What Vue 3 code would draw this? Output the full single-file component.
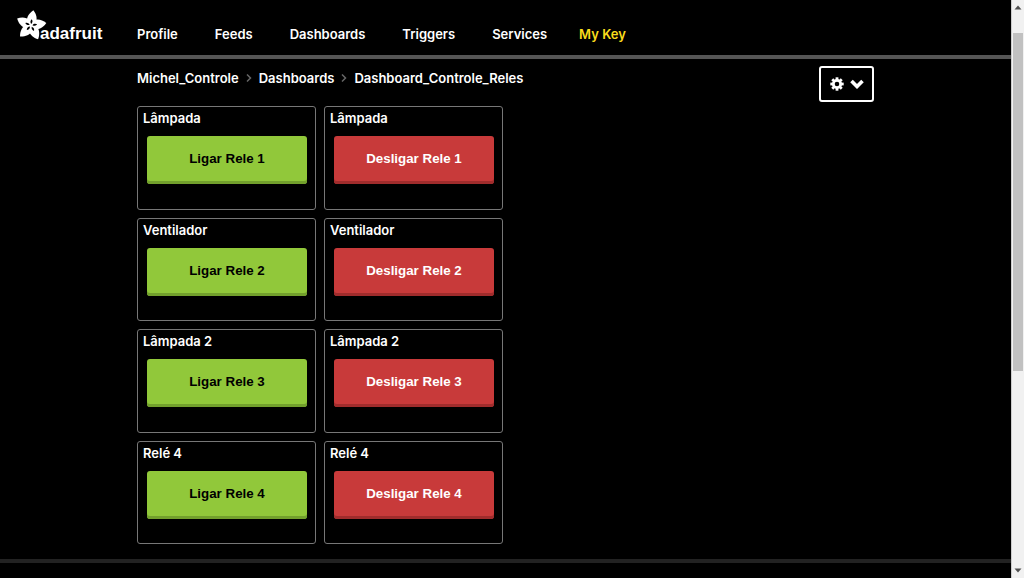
<script setup>
const links = ['Profile', 'Feeds', 'Dashboards', 'Triggers', 'Services']
const petals = [0, 72, 144, 216, 288]
const teeth = [0, 45, 90, 135, 180, 225, 270, 315]
const names = ['Lâmpada', 'Ventilador', 'Lâmpada 2', 'Relé 4']
const blocks = names.flatMap((name, i) => [
  { id: `on-${i}`, name, label: `Ligar Rele ${i + 1}`, kind: 'on' },
  { id: `off-${i}`, name, label: `Desligar Rele ${i + 1}`, kind: 'off' },
])
</script>

<template>
  <div class="page">
    <div class="content">
      <header class="top">
        <a class="logo" href="#" aria-label="adafruit">
          <svg class="flower" viewBox="0 0 31 32" aria-hidden="true">
            <g transform="translate(15 15.5) rotate(7)">
              <path
                v-for="a in petals"
                :key="a"
                :transform="`rotate(${a})`"
                d="M-4.5 -3 C-5.5 -8 -3.5 -12 0.5 -15.5 C4 -12 5.5 -8 4.5 -3 L0 2 Z"
                fill="#fff"
              />
              <path
                v-for="a in petals"
                :key="`s${a}`"
                :transform="`rotate(${a})`"
                d="M0 -1.5 C-1.4 -3 -1.3 -4.8 0 -6.2 C1.3 -4.8 1.4 -3 0 -1.5 Z"
                fill="#000"
              />
            </g>
          </svg>
          <span class="wordmark">adafruit</span>
        </a>
        <nav class="nav">
          <a v-for="link in links" :key="link" href="#">{{ link }}</a>
          <a class="key" href="#">My Key</a>
        </nav>
      </header>

      <main class="main">
        <div class="bar">
          <nav class="crumbs" aria-label="Breadcrumb">
            <a href="#">Michel_Controle</a>
            <svg viewBox="0 0 6 8" aria-hidden="true"><path d="M1 0.5 L4.5 4 L1 7.5" /></svg>
            <a href="#">Dashboards</a>
            <svg viewBox="0 0 6 8" aria-hidden="true"><path d="M1 0.5 L4.5 4 L1 7.5" /></svg>
            <a href="#">Dashboard_Controle_Reles</a>
          </nav>
          <button class="settings" type="button" aria-label="Settings">
            <svg class="gear" viewBox="-7 -7 14 14" aria-hidden="true">
              <rect
                v-for="a in teeth"
                :key="a"
                :transform="`rotate(${a})`"
                x="-1.4" y="-6.7" width="2.8" height="3" fill="#fff"
              />
              <circle r="3.7" fill="none" stroke="#fff" stroke-width="2.8" />
            </svg>
            <svg class="chevron" viewBox="0 0 14 10" aria-hidden="true">
              <path d="M1.5 2 L7 7.5 L12.5 2" fill="none" stroke="#fff" stroke-width="3.6" />
            </svg>
          </button>
        </div>

        <div class="grid">
          <section v-for="b in blocks" :key="b.id" class="block">
            <h2>{{ b.name }}</h2>
            <button type="button" class="relay" :class="b.kind">{{ b.label }}</button>
          </section>
        </div>
      </main>

      <footer class="foot"></footer>
    </div>

    <div class="scroll" aria-hidden="true">
      <svg viewBox="0 0 8 5"><path d="M4 0.5 L7.5 4.5 L0.5 4.5 Z" fill="#505050" /></svg>
      <div class="track"><div class="thumb"></div></div>
      <svg viewBox="0 0 8 5"><path d="M0.5 0.5 L7.5 0.5 L4 4.5 Z" fill="#505050" /></svg>
    </div>
  </div>
</template>

<style>
body {
  background: #000;
}
</style>

<style scoped>
* {
  box-sizing: border-box;
}
.page {
  display: flex;
  min-height: 100vh;
  background: #000;
  color: #fff;
  font: 600 13px/16px Inter, "Liberation Sans", sans-serif;
}
.content {
  flex: 1;
  min-width: 0;
  display: flex;
  flex-direction: column;
}
a {
  color: inherit;
  text-decoration: none;
}
.top {
  display: flex;
  height: 59px;
  border-bottom: 4px solid #555;
}
.logo {
  display: flex;
  width: 137px;
  padding: 10px 0 0 16px;
}
.flower {
  width: 31px;
  height: 32px;
}
.wordmark {
  margin: 14px 0 0 -7px;
  font: 700 17px/20px "Liberation Sans", Arial, sans-serif;
}
.nav {
  display: flex;
  gap: 37px;
  padding-top: 26px;
}
.key {
  margin-left: -5px;
  color: #f9dc1c;
}
.main {
  flex: 1;
  padding: 7px 137px 15px;
}
.bar {
  display: flex;
  justify-content: space-between;
  align-items: flex-start;
  height: 40px;
}
.crumbs {
  display: flex;
  align-items: center;
  gap: 7px;
  padding-top: 4px;
}
.crumbs svg {
  width: 6px;
  height: 8px;
  fill: none;
  stroke: #666;
  stroke-width: 1.5;
}
.settings {
  display: flex;
  align-items: center;
  justify-content: center;
  gap: 6px;
  width: 55px;
  height: 36px;
  padding: 0;
  border: 2px solid #fff;
  border-radius: 3px;
  background: #000;
}
.gear {
  width: 14px;
  height: 14px;
}
.chevron {
  width: 14px;
  height: 10px;
}
.grid {
  display: grid;
  grid-template-columns: repeat(2, 179px);
  grid-auto-rows: 1fr;
  gap: 8px;
  min-height: 438px;
}
.block {
  padding: 3px 8px 8px 5px;
  border: 1px solid #777;
  border-radius: 3px;
}
h2 {
  margin: 0 0 10px;
  font: inherit;
}
.relay {
  display: block;
  width: 160px;
  height: 48px;
  margin-left: 4px;
  padding: 0 0 3px;
  border: 0;
  border-radius: 3px;
  font-family: "Liberation Sans", Arial, sans-serif;
  font-weight: 700;
}
.on {
  background: #91c83a;
  box-shadow: inset 0 -3px #72a02c;
  color: #000;
}
.off {
  background: #c83a3a;
  box-shadow: inset 0 -3px #a02c2c;
  color: #fff;
}
.foot {
  height: 19px;
  border-top: 4px solid #222;
}
.scroll {
  display: flex;
  flex-direction: column;
  align-items: center;
  width: 13px;
  padding: 5px 0;
  border-left: 1px solid #ccc;
  background: #f1f1f1;
}
.scroll svg {
  width: 8px;
  height: 5px;
}
.track {
  flex: 1;
  padding-top: 23px;
}
.thumb {
  width: 10px;
  height: 60vh;
  max-height: 338px;
  background: #c1c1c1;
}
</style>
